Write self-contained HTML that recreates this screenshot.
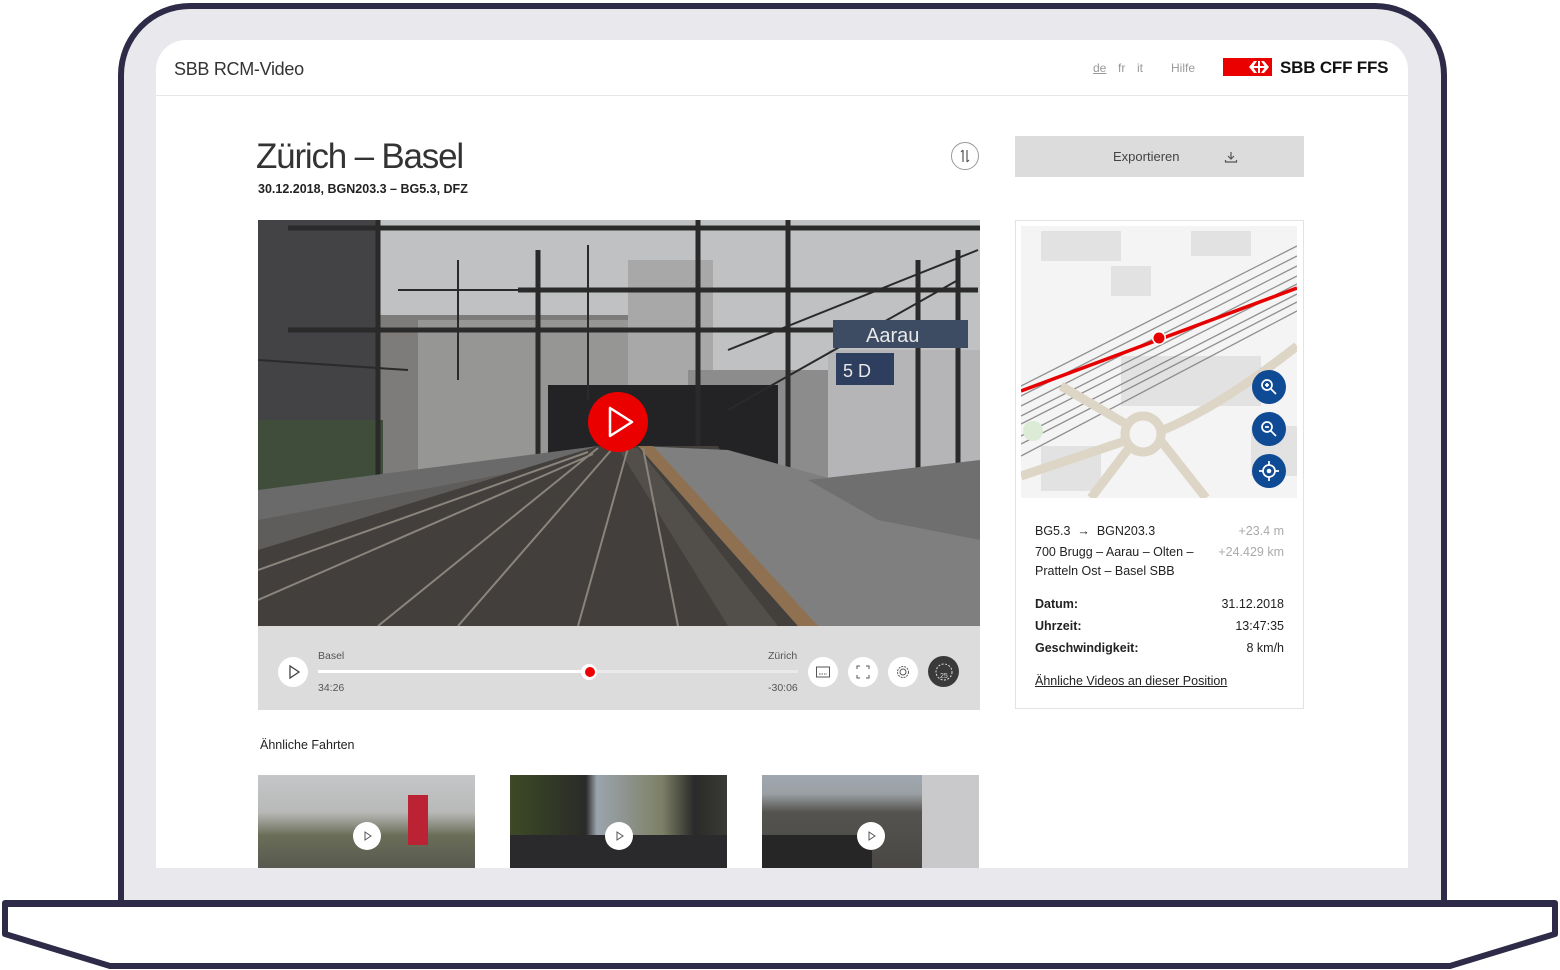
<!DOCTYPE html>
<html><head><meta charset="utf-8"><style>
*{margin:0;padding:0;box-sizing:border-box}
body{width:1560px;height:970px;background:#fff;position:relative;overflow:hidden;font-family:"Liberation Sans",sans-serif;color:#222}
.abs{position:absolute}
.lap{left:118px;top:3px;width:1329px;height:905px;border:6px solid #2d2b47;border-bottom:none;border-radius:72px 72px 0 0;background:#e8e8ed}
.screen{left:156px;top:40px;width:1252px;height:828px;background:#fff;border-radius:30px 30px 0 0;overflow:hidden}
.t{position:absolute;white-space:nowrap}
.cbtn{position:absolute;width:30px;height:30px;border-radius:50%;background:#fff}
.thumb{position:absolute;top:775px;width:217px;height:93px;overflow:hidden}
.tp{position:absolute;left:95px;top:47px;width:28px;height:28px;border-radius:50%;background:#fff}
.mb{position:absolute;left:1252px;width:34px;height:34px;border-radius:50%;background:#0f4a94}
</style></head><body>
<div class="abs lap"></div>
<div class="abs screen">
 <div class="t" style="left:18px;top:19px;font-size:18px;color:#333;letter-spacing:-0.3px">SBB RCM-Video</div>
 <div style="position:absolute;left:0;top:55px;width:1252px;height:1px;background:#e6e6e6"></div>
 <div class="t" style="left:937px;top:21px;font-size:12px;color:#999;text-decoration:underline">de</div>
 <div class="t" style="left:962px;top:21px;font-size:12px;color:#999">fr</div>
 <div class="t" style="left:981px;top:21px;font-size:12px;color:#999">it</div>
 <div class="t" style="left:1015px;top:21px;font-size:12px;color:#999">Hilfe</div>
 <div style="position:absolute;left:1067px;top:18px;width:49px;height:18px;background:#eb0000"></div>
 <svg style="position:absolute;left:1092px;top:19px" width="22" height="16" viewBox="0 0 22 16"><path d="M6 2L1 8l5 6h3L5.5 9H10v5h2V9h4.5L13 14h3l5-6-5-6h-3l3.5 5H12V2h-2v5H5.5L9 2z" fill="#fff"/></svg>
 <div class="t" style="left:1124px;top:18px;font-size:17px;font-weight:bold;color:#111;letter-spacing:-0.2px">SBB CFF FFS</div>
</div>
<div class="t" style="left:256px;top:137px;font-size:35px;font-weight:300;color:#333;letter-spacing:-1.2px">Zürich – Basel</div>
<div class="t" style="left:258px;top:182px;font-size:12.5px;font-weight:bold;color:#222">30.12.2018, BGN203.3 – BG5.3, DFZ</div>
<div class="abs" style="left:951px;top:142px;width:28px;height:28px;border:1px solid #999;border-radius:50%"></div>
<svg class="abs" style="left:958px;top:147px" width="14" height="18" viewBox="0 0 14 18"><path d="M5 3v12M3 5l2-2M9 15V3M11 13l-2 2" stroke="#555" stroke-width="1.2" fill="none"/></svg>
<div class="abs" style="left:1015px;top:136px;width:289px;height:41px;background:#dcdcdc"></div>
<div class="t" style="left:1113px;top:149px;font-size:13px;color:#444">Exportieren</div>
<svg class="abs" style="left:1224px;top:150px" width="14" height="14" viewBox="0 0 14 14"><path d="M7 2v7M4 6l3 3 3-3M1.5 10v2h11v-2" stroke="#555" stroke-width="1.2" fill="none"/></svg>

<svg class="abs" style="left:258px;top:220px" width="722" height="406" viewBox="0 0 722 406">
 <rect width="722" height="406" fill="#a9a9ab"/>
 <rect x="0" y="0" width="722" height="150" fill="#c0c1c3"/>
 <rect x="110" y="95" width="330" height="170" fill="#7d7c7a"/>
 <rect x="160" y="100" width="240" height="170" fill="#969695"/>
 <rect x="370" y="40" width="85" height="250" fill="#a8a8a8"/>
 <rect x="430" y="150" width="300" height="150" fill="#8c8c8d"/>
 <rect x="0" y="0" width="118" height="270" fill="#434346"/>
 <rect x="0" y="200" width="125" height="70" fill="#3f4d3a"/>
 <rect x="0" y="270" width="270" height="80" fill="#6e6e6e"/>
 <rect x="290" y="165" width="230" height="120" fill="#232326"/>
 <rect x="570" y="130" width="152" height="160" fill="#b5b5b7"/>
 <g stroke="#2a2a2a" fill="none">
 <path d="M30 8H722M30 110H580M260 70H720M120 0V270M280 30V300M440 0V300M530 0V290M660 40V300M700 30V310" stroke-width="5"/>
 <path d="M140 70L330 70M200 40V160M330 25V180M0 140L150 150M470 130L720 30M470 190L700 60" stroke-width="2"/>
 </g>
 <rect x="575" y="100" width="135" height="28" fill="#3e4c63"/>
 <rect x="578" y="133" width="58" height="32" fill="#2d3e5e"/>
 <text x="608" y="122" font-size="20" fill="#e8e8e8" font-family="Liberation Sans">Aarau</text>
 <text x="585" y="157" font-size="18" fill="#e8e8e8" font-family="Liberation Sans">5 D</text>
 <polygon points="0,270 340,226 340,236 0,300" fill="#6a6a6a"/>
 <polygon points="0,300 340,236 0,330" fill="#5e5d5b"/>
 <polygon points="0,330 340,226 460,226 560,406 0,406" fill="#423f3c"/>
 <polygon points="360,228 380,228 520,406 470,406" fill="#524e4a"/>
 <polygon points="380,226 540,406 722,406 722,300 470,230" fill="#7f7f7f"/>
 <polygon points="380,226 395,226 560,406 540,406" fill="#8f7050"/>
 <polygon points="550,260 722,240 722,320 620,300" fill="#6f6f6f"/>
 <g stroke="#8a847c" stroke-width="2" fill="none"><path d="M340 228L120 406M355 228L200 406M370 228L320 406M385 228L420 406M0 350L330 232M0 380L335 234"/></g>
 <circle cx="360" cy="202" r="30" fill="#eb0000"/>
 <path d="M352 188v28l22-14z" stroke="#fff" stroke-width="2.5" fill="none" stroke-linejoin="round"/>
</svg>
<div class="abs" style="left:258px;top:626px;width:722px;height:84px;background:#dcdcdc"></div>
<div class="cbtn" style="left:278px;top:657px"></div>
<svg class="abs" style="left:287px;top:664px" width="14" height="16"><path d="M3 2v12l9-6z" stroke="#444" stroke-width="1.3" fill="none"/></svg>
<div class="t" style="left:318px;top:650px;font-size:10.5px;color:#555">Basel</div>
<div class="t" style="left:318px;top:682px;font-size:10.5px;color:#555">34:26</div>
<div class="t" style="left:768px;top:650px;font-size:10.5px;color:#555">Zürich</div>
<div class="t" style="left:768px;top:682px;font-size:10.5px;color:#555">-30:06</div>
<div class="abs" style="left:318px;top:670px;width:480px;height:3px;background:#eaeaea"></div>
<div class="abs" style="left:318px;top:670px;width:272px;height:3px;background:#fff"></div>
<div class="abs" style="left:581px;top:664px;width:16px;height:16px;border-radius:50%;background:#fff"></div>
<div class="abs" style="left:585px;top:667px;width:10px;height:10px;border-radius:50%;background:#e00"></div>
<div class="cbtn" style="left:808px;top:657px"></div>
<svg class="abs" style="left:815px;top:664px" width="16" height="16"><rect x="1.5" y="3" width="13" height="10" stroke="#555" fill="none"/><path d="M4 10h8" stroke="#555" stroke-dasharray="1.5 1"/></svg>
<div class="cbtn" style="left:848px;top:657px"></div>
<svg class="abs" style="left:855px;top:664px" width="16" height="16"><path d="M2 5V2h3M11 2h3v3M14 11v3h-3M5 14H2v-3" stroke="#555" fill="none"/></svg>
<div class="cbtn" style="left:888px;top:657px"></div>
<svg class="abs" style="left:894px;top:663px" width="18" height="18"><circle cx="9" cy="9" r="5.5" stroke="#555" fill="none" stroke-dasharray="2 1"/><circle cx="9" cy="9" r="3" stroke="#555" fill="none"/></svg>
<div class="cbtn" style="left:928px;top:656px;background:#3a3a3a;width:31px;height:31px"></div>
<svg class="abs" style="left:933px;top:661px" width="22" height="22"><circle cx="11" cy="11" r="8" stroke="#ddd" fill="none" stroke-dasharray="2 1.5"/><text x="7" y="17" font-size="7" fill="#ddd" font-family="Liberation Sans">25</text></svg>

<div class="t" style="left:260px;top:738px;font-size:12.5px;color:#222">Ähnliche Fahrten</div>
<div class="thumb" style="left:258px;background:linear-gradient(#c4c6c8 0%,#b8b9b8 40%,#6a6e58 65%,#58594f 100%)"><div style="position:absolute;left:150px;top:20px;width:20px;height:50px;background:#b23"></div><div class="tp"></div><svg style="position:absolute;left:104px;top:55px" width="12" height="12"><path d="M3 2v8l6-4z" stroke="#555" fill="none"/></svg></div>
<div class="thumb" style="left:510px;background:linear-gradient(90deg,#3d4a25 0%,#2a2a28 35%,#9ba4ad 40%,#7d8066 70%,#2a2a2a 85%,#3a3a36 100%)"><div style="position:absolute;left:0;top:60px;width:217px;height:40px;background:#2a2a2c"></div><div class="tp"></div><svg style="position:absolute;left:104px;top:55px" width="12" height="12"><path d="M3 2v8l6-4z" stroke="#555" fill="none"/></svg></div>
<div class="thumb" style="left:762px;background:linear-gradient(#9fa7b0 0%,#9aa0a4 20%,#55534f 40%,#4a4844 100%)"><div style="position:absolute;left:160px;top:0;width:57px;height:93px;background:#c9c9cc"></div><div style="position:absolute;left:0;top:60px;width:110px;height:33px;background:#262626"></div><div class="tp"></div><svg style="position:absolute;left:104px;top:55px" width="12" height="12"><path d="M3 2v8l6-4z" stroke="#555" fill="none"/></svg></div>

<div class="abs" style="left:1015px;top:220px;width:289px;height:489px;border:1px solid #e3e3e3;background:#fff"></div>
<svg class="abs" style="left:1021px;top:226px" width="276" height="272" viewBox="0 0 276 272">
 <rect width="276" height="272" fill="#f4f4f4"/>
 <g fill="#e2e2e2"><rect x="20" y="5" width="80" height="30"/><rect x="90" y="40" width="40" height="30"/><rect x="170" y="5" width="60" height="25"/><rect x="100" y="130" width="140" height="50"/><rect x="40" y="5" width="20" height="20"/><rect x="230" y="200" width="46" height="50"/><rect x="20" y="220" width="60" height="45"/></g>
 <path d="M0 160L276 20M0 170L276 30M0 180L276 40M0 190L276 50M0 198L276 58M0 210L276 68M0 218L276 76M0 230L276 85" stroke="#777" stroke-width="1.3" fill="none" opacity="0.8"/>
 <path d="M0 165L276 62" stroke="#e60000" stroke-width="3.5"/>
 <circle cx="138" cy="112" r="7" fill="#fff"/><circle cx="138" cy="112" r="5.5" fill="#e60000"/>
 <g stroke="#ddd6c6" stroke-width="9" fill="none"><circle cx="122" cy="208" r="18"/><path d="M40 160L105 198M140 205Q200 180 276 120M0 250L104 215M140 215L185 272M70 272L108 222"/></g>
 <circle cx="12" cy="205" r="10" fill="#dcebd6"/>
</svg>
<div class="mb" style="top:370px"></div><div class="mb" style="top:412px"></div><div class="mb" style="top:454px"></div>
<svg class="abs" style="left:1252px;top:370px" width="34" height="120"><g stroke="#fff" stroke-width="1.7" fill="none"><circle cx="15" cy="15" r="5"/><path d="M19 19l5 5M13 15h4M15 13v4"/><circle cx="15" cy="57" r="5"/><path d="M19 61l5 5M13 57h4"/><circle cx="17" cy="101" r="6"/><path d="M17 91v4M17 107v4M7 101h4M23 101h4"/></g><circle cx="17" cy="101" r="2.3" fill="#fff"/></svg>
<div class="t" style="left:1035px;top:524px;font-size:12.5px;color:#222">BG5.3 &nbsp;→ &nbsp;BGN203.3</div>
<div class="t" style="left:1035px;top:545px;font-size:12.5px;color:#222">700 Brugg – Aarau – Olten –</div>
<div class="t" style="left:1035px;top:564px;font-size:12.5px;color:#222">Pratteln Ost – Basel SBB</div>
<div class="t" style="right:276px;top:524px;font-size:12.5px;color:#aaa">+23.4 m</div>
<div class="t" style="right:276px;top:545px;font-size:12.5px;color:#aaa">+24.429 km</div>
<div class="t" style="left:1035px;top:597px;font-size:12.5px;font-weight:bold">Datum:</div>
<div class="t" style="left:1035px;top:619px;font-size:12.5px;font-weight:bold">Uhrzeit:</div>
<div class="t" style="left:1035px;top:641px;font-size:12.5px;font-weight:bold">Geschwindigkeit:</div>
<div class="t" style="right:276px;top:597px;font-size:12.5px">31.12.2018</div>
<div class="t" style="right:276px;top:619px;font-size:12.5px">13:47:35</div>
<div class="t" style="right:276px;top:641px;font-size:12.5px">8 km/h</div>
<div class="t" style="left:1035px;top:674px;font-size:12.5px;text-decoration:underline">Ähnliche Videos an dieser Position</div>

<svg class="abs" style="left:0;top:896px" width="1560" height="74" viewBox="0 0 1560 74">
 <path d="M5 8H1555V38L1450 70H110L5 38Z" fill="#fff" stroke="#2d2b47" stroke-width="6" stroke-linejoin="round"/>
 <rect x="2" y="4" width="1556" height="6" fill="#2d2b47" rx="3"/>
</svg>
</body></html>
